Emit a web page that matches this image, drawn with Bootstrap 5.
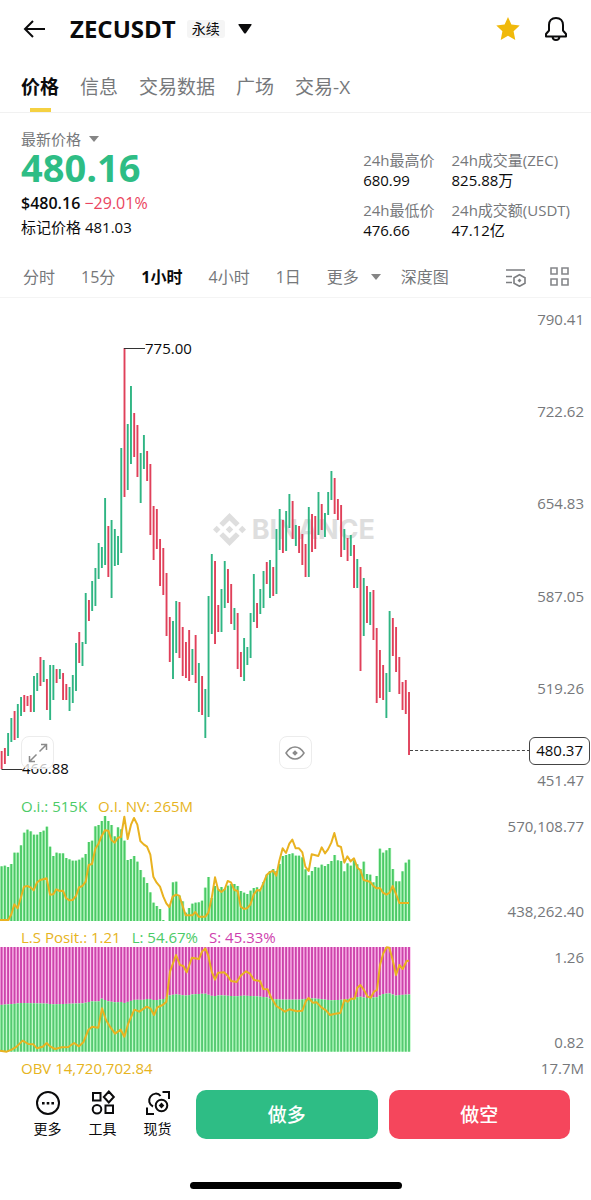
<!DOCTYPE html>
<html lang="zh-CN">
<head>
<meta charset="utf-8">
<meta name="viewport" content="width=device-width, initial-scale=1">
<title>ZECUSDT 永续</title>
<link href="https://cdn.jsdelivr.net/npm/bootstrap@5.3.0/dist/css/bootstrap.min.css" rel="stylesheet">
<style>
  :root { --up: #2ebd85; --down: #f5465c; --ink: #0b0b0c; --dim: #76787b; --gold: #e6b422; --oi: #4ccb67; --short: #cf3fae; }
  body { font-family: "Open Sans", "Noto Sans CJK SC", sans-serif; color: var(--ink); background: #fff; font-size: 15px; line-height: 20px; }
  button { font: inherit; color: inherit; background: none; border: 0; padding: 0; }
  svg { display: block; }
  .top-bar { height: 58px; padding: 0 23px; }
  .pair-name { font-size: 24px; line-height: 30px; font-weight: 700; margin: 0 11px 0 25px; }
  .perp-tag { font-size: 14px; line-height: 18px; background: #f5f5f5; border-radius: 3px; padding: 0 5px; margin-right: 13px; }
  .page-tabs { height: 55px; padding: 0 21px; gap: 21px; border-bottom: 1px solid #f1f1f1; font-size: 19px; line-height: 58px; }
  .page-tabs a { color: var(--dim); text-decoration: none; position: relative; }
  .page-tabs a.active { color: var(--ink); font-weight: 600; }
  .page-tabs a.active::after { content: ""; position: absolute; left: 50%; bottom: 0; width: 21px; height: 4px; margin-left: -10px; background: #f5d142; }
  .summary { padding: 16px 21px 0; height: 139px; }
  .last-price { font-size: 38px; line-height: 36px; font-weight: 700; color: var(--up); }
  .fiat-row { font-size: 16px; }
  .text-dim { color: var(--dim); }
  .text-down { color: #ea4560; }
  .stats { padding-top: 21px; row-gap: 10px; column-gap: 17px; display: grid; grid-template-columns: auto auto; align-content: start; }
  .intervals { height: 46px; padding: 4px 22px 0 23px; gap: 26px; font-size: 16px; line-height: 24px; color: var(--dim); border-bottom: 1px solid #f4f4f4; }
  .intervals .active { color: var(--ink); font-weight: 700; }
  .more-group { gap: 20px; }
  .plot { width: 100%; }
  .price-pane .plot { height: 496px; }
  .study .plot { height: 131px; }
  .axis { position: absolute; right: 7px; top: 0; bottom: 0; text-align: right; color: var(--dim); display: flex; flex-direction: column; justify-content: space-between; }
  .price-pane .axis { padding: 11px 0 4px; }
  .study .axis { padding: 22px 0 4px; }
  .legend-line { position: absolute; left: 21px; top: 2px; gap: 11px; }
  .over { position: absolute; line-height: 20px; }
  .high-mark { left: 145px; top: 40px; }
  .low-mark { left: 22px; top: 460px; }
  .brand-mark { left: 36%; top: 215px; gap: 6px; color: #dedede; font-family: Inter, sans-serif; font-weight: 700; font-size: 27px; line-height: 32px; }
  .tool-btn { position: absolute; top: 438px; width: 33px; height: 33px; border: 1px solid #ececec; border-radius: 8px; background: rgba(255,255,255,.75); display: flex; align-items: center; justify-content: center; }
  .expand-btn { left: 21px; }
  .eye-btn { left: 50%; margin-left: -17px; }
  .now-line { position: absolute; left: 410px; right: 61px; top: 452px; border-top: 1px dashed #444; }
  .now-tag { position: absolute; right: 1px; top: 439px; height: 28px; line-height: 25px; padding: 0 6px; border: 1px solid #444; border-radius: 6px; background: #fff; }
  .obv-row { padding: 2px 7px 2px 21px; }
  .dock { height: 72px; padding: 10px 21px 12px 20px; gap: 11px; }
  .dock-item { width: 55px; font-size: 14px; line-height: 18px; }
  .trade { height: 49px; border-radius: 10px; color: #fff; font-size: 19px; font-weight: 500; }
  .home-bar { width: 212px; height: 7px; border-radius: 4px; background: #000; margin: 30px auto 10px; }
</style>
</head>
<body>
<header class="top-bar d-flex align-items-center">
  <button type="button" aria-label="返回"><svg width="22" height="20" viewBox="0 0 22 20" fill="none" stroke="#0b0b0c" stroke-width="2"><path d="M10 2 2 10l8 8M2 10h20"/></svg></button>
  <h1 class="pair-name">ZECUSDT</h1>
  <span class="perp-tag">永续</span>
  <button type="button" aria-label="选择合约"><svg width="14" height="10" viewBox="0 0 14 10"><path d="M1 0h12q1 0 .5 1L8 9q-1 1-2 0L.5 1Q0 0 1 0z" fill="#0b0b0c"/></svg></button>
  <button type="button" class="ms-auto" aria-label="收藏"><svg width="24" height="24" viewBox="0 0 24 24"><path d="m12 0 3.400 7.600 8.300.9-6.100 5.700 1.700 8.800-7.300-4.300L4.700 23l1.700-8.800L.3 8.500l8.300-.9z" fill="#f0b90b"/></svg></button>
  <button type="button" class="ms-4" aria-label="提醒"><svg width="24" height="26" viewBox="0 0 24 26" fill="none" stroke="#0b0b0c" stroke-width="2" stroke-linejoin="round"><path d="M12 2C7.500 2 5 5 5 9v5.500L2 18v2.500h20V18l-3-3.500V9c0-4-2.500-7-7-7zM8.500 21c.5 4 6.500 4 7 0"/></svg></button>
</header>
<nav class="page-tabs d-flex">
  <a class="active" href="#price" aria-current="page">价格</a><a href="#info">信息</a><a href="#data">交易数据</a><a href="#square">广场</a><a href="#tx">交易-X</a>
</nav>
<main>
<section class="summary d-flex justify-content-between" id="price">
  <div>
    <button type="button" class="text-dim d-flex align-items-center">最新价格<svg class="ms-2" width="10" height="6" viewBox="0 0 10 6"><path d="M0 0h10L5 6z" fill="#858585"/></svg></button>
    <div class="last-price">480.16</div>
    <div class="fiat-row mt-2"><span class="fw-semibold">$480.16</span> <span class="text-down">−29.01%</span></div>
    <div class="mt-1">标记价格 481.03</div>
  </div>
  <div class="stats">
    <div><div class="text-dim">24h最高价</div><div>680.99</div></div>
    <div><div class="text-dim">24h成交量(ZEC)</div><div>825.88万</div></div>
    <div><div class="text-dim">24h最低价</div><div>476.66</div></div>
    <div><div class="text-dim">24h成交额(USDT)</div><div>47.12亿</div></div>
  </div>
</section>
<div class="intervals d-flex align-items-center">
  <button type="button">分时</button><button type="button">15分</button><button type="button" class="active">1小时</button><button type="button">4小时</button><button type="button">1日</button>
  <div class="more-group d-flex align-items-center">
    <button type="button" class="d-flex align-items-center">更多<svg class="ms-2" width="14" height="6" viewBox="0 0 14 6"><path d="M4 0h10L9 6z" fill="#858585"/></svg></button>
    <button type="button">深度图</button>
  </div>
  <div class="d-flex align-items-center gap-4 ms-auto">
    <button type="button" aria-label="指标设置"><svg width="20" height="20" viewBox="0 0 20 20" fill="none" stroke="#7c7e81" stroke-width="1.600"><path d="M0 3h19M0 9.500h6M0 15.500h6"/><path d="M13.500 7.700 19 10.800v5.400l-5.500 3.100L8 16.200v-5.400z"/><path d="m13.500 11.500 2 2-2 2-2-2z" fill="#7c7e81" stroke="none"/></svg></button>
    <button type="button" aria-label="布局"><svg width="19" height="19" viewBox="0 0 19 19" fill="none" stroke="#85878a" stroke-width="1.600"><path d="M1 1h6v6H1zM12 1h6v6h-6zM1 12h6v6H1zM12 12h6v6h-6z"/></svg></button>
  </div>
</div>
<section class="price-pane position-relative overflow-hidden">
  <div class="brand-mark over d-flex align-items-center" aria-hidden="true">
    <svg width="33" height="33" viewBox="0 0 126.610 126.610" fill="currentColor"><path d="m38.730 53.200 24.590-24.580 24.600 24.600 14.300-14.310L63.320 0l-38.900 38.900zM0 63.310l14.300-14.310 14.310 14.310L14.300 77.610zM38.730 73.410l24.590 24.590 24.600-24.600 14.310 14.290-38.910 38.920-38.910-38.880zM98 63.310 112.300 49l14.310 14.300-14.310 14.320zM77.830 63.300 63.320 48.780 52.590 59.510l-1.240 1.230-2.540 2.540 14.510 14.500 14.510-14.470z"/></svg>BINANCE
  </div>
  <div class="over low-mark">466.88</div>
  <svg class="plot position-relative" id="candles" viewBox="0 298 591 496" preserveAspectRatio="none"></svg>
  <div class="over high-mark">775.00</div>
  <div class="axis"><span>790.41</span><span>722.62</span><span>654.83</span><span>587.05</span><span>519.26</span><span>451.47</span></div>
  <button type="button" class="tool-btn expand-btn" aria-label="全屏"><svg width="20" height="20" viewBox="0 0 20 20" fill="none" stroke="#8a8a8a" stroke-width="1.500"><path d="M13 1.500h5.500V7M18.500 1.500l-7 7M7 18.500H1.500V13M1.500 18.500l7-7"/></svg></button>
  <button type="button" class="tool-btn eye-btn" aria-label="显示"><svg width="20" height="14" viewBox="0 0 20 14" fill="none" stroke="#8a8a8a" stroke-width="1.500"><path d="M1 7c5-8 13-8 18 0-5 8-13 8-18 0z"/><path d="m10 4.200 2.800 2.800-2.800 2.800L7.200 7z" fill="#8a8a8a" stroke="none"/></svg></button>
  <div class="now-line"></div><div class="now-tag">480.37</div>
</section>
<section class="study position-relative">
  <svg class="plot" id="oi" viewBox="0 12 1773 393" preserveAspectRatio="none"></svg>
  <div class="legend-line d-flex"><span style="color:var(--oi)">O.i.: 515K</span><span style="color:var(--gold)">O.I. NV: 265M</span></div>
  <div class="axis"><span>570,108.77</span><span>438,262.40</span></div>
</section>
<section class="study position-relative">
  <svg class="plot" id="ls" viewBox="0 0 1773 393" preserveAspectRatio="none"></svg>
  <div class="legend-line d-flex"><span style="color:var(--gold)">L.S Posit.: 1.21</span><span style="color:var(--oi)">L: 54.67%</span><span style="color:var(--short)">S: 45.33%</span></div>
  <div class="axis"><span>1.26</span><span>0.82</span></div>
</section>
<div class="obv-row d-flex justify-content-between align-items-center"><span style="color:var(--gold)">OBV 14,720,702.84</span><span class="text-dim">17.7M</span></div>
</main>
<footer>
  <div class="dock d-flex">
    <div class="d-flex">
      <button type="button" class="dock-item d-flex flex-column align-items-center"><svg class="mb-1" width="26" height="26" viewBox="0 0 26 26" fill="none" stroke="#0b0b0c" stroke-width="2"><circle cx="13" cy="13" r="11"/><path d="M7 12h2.600v2.600H7zM11.700 12h2.600v2.600h-2.600zM16.400 12H19v2.600h-2.600z" fill="#0b0b0c" stroke="none"/></svg>更多</button>
      <button type="button" class="dock-item d-flex flex-column align-items-center"><svg class="mb-1" width="26" height="26" viewBox="0 0 26 26" fill="none" stroke="#0b0b0c" stroke-width="2"><path d="M3 3h7.500v7.500H3zM18.800 1.500 23.800 7l-5 5.500-5-5.500zM15.500 15.500H23V23h-7.500z"/><circle cx="7" cy="19.300" r="4.300"/></svg>工具</button>
      <button type="button" class="dock-item d-flex flex-column align-items-center"><svg class="mb-1" width="26" height="26" viewBox="0 0 26 26" fill="none" stroke="#0b0b0c" stroke-width="2"><path d="M17.500 2H24v7M2 17.500V24h7M8 16.500C4 14.500 3 10 5.500 6.500S13 2.500 15.500 6"/><circle cx="16.500" cy="15.500" r="5.800"/><path d="m16.500 12.500 2.800 3-2.800 3-2.800-3z" fill="#0b0b0c" stroke="none"/></svg>现货</button>
    </div>
    <div class="d-flex flex-fill" style="gap:11px">
      <button type="button" class="trade flex-fill" style="background:var(--up)">做多</button>
      <button type="button" class="trade flex-fill" style="background:var(--down)">做空</button>
    </div>
  </div>
  <div class="home-bar"></div>
</footer>
<script src="https://cdn.jsdelivr.net/npm/bootstrap@5.3.0/dist/js/bootstrap.bundle.min.js"></script>
<script>
  // One entry per hourly candle: direction, high, low (plot units).
  const candles = `r751-769 r748-764 g733-756 g718-742 r711-740 g704-738 g697-716 r695-712 r696-706 r695-712
   g676-712 g673-691 r657-686 g660-682 r679-710 g665-720 g665-700 r669-683 g669-679 r673-700
   r684-700 g687-711 g675-703 g643-691 r632-663 g642-666 g593-644 r600-621 g581-611 g568-606
   g543-579 g547-568 g498-565 r526-577 g520-598 g529-566 g536-565 g448-553 r348-497 g424-490
   g386-464 r413-457 r425-477 g453-503 g435-469 r451-481 r464-535 r506-560 r509-549 r539-586
   r548-595 r573-636 r617-662 g621-679 g601-653 r602-658 r627-676 r642-678 r630-681 g649-675
   r635-683 g663-712 r676-715 g689-738 g596-717 g554-634 r561-644 r605-632 g589-632 g561-608
   r569-603 r584-624 g608-630 r613-669 r652-677 g638-681 g647-665 g613-658 g574-622 r603-628
   g589-614 g571-608 r562-584 g560-598 r567-596 g529-594 g509-550 r520-553 g511-551 g494-528
   r501-539 g525-546 r526-553 r534-565 r544-577 g507-577 r514-552 r516-549 g492-535 r504-530
   g513-537 g492-515 g471-500 r478-514 r499-520 r505-557 g529-550 r538-561 g535-556 r545-588
   g559-588 r567-671 g578-636 r586-623 g592-625 r590-640 r628-703 r650-698 r665-700 g673-718
   g611-692 r618-656 r627-672 r657-694 r682-710 r680-714 r692-755`.trim().split(/\s+/);
  const openInterest = [229,227,231,222,188,188,166,128,119,124,134,134,126,122,110,170,198,188,190,190,204,208,212,212,209,203,192,156,152,109,105,93,78,93,105,139,112,118,152,210,207,198,215,240,262,279,307,338,348,357,390,393,345,277,275,317,334,368,354,341,338,337,332,293,261,324,288,298,291,297,287,282,282,288,303,308,312,302,294,292,297,276,254,243,237,243,222,198,195,192,190,197,197,202,238,256,243,231,233,224,228,222,213,195,211,213,244,220,227,211,223,237,215,252,254,277,258,176,188,181,174,237,274,274,244,218,209];
  const oiLine = "0,390 25,390 34,373 43,343 53,355 63,322 72,290 82,288 92,292 101,301 111,277 121,270 140,265 150,314 160,313 169,298 179,303 189,302 198,324 208,331 218,330 228,318 237,292 247,288 257,275 266,225 276,222 286,176 295,162 305,138 315,121 325,122 334,150 344,158 354,143 363,141 373,80 383,147 393,104 402,84 412,104 421,153 431,163 441,170 451,194 460,260 470,278 480,290 490,320 499,340 508,351 518,320 528,314 538,317 547,345 557,376 577,376 586,366 596,380 616,380 625,368 635,325 645,262 654,298 664,306 674,298 683,273 693,277 703,300 713,303 722,350 732,357 741,355 751,344 761,314 771,300 780,302 790,280 800,255 809,247 819,242 829,257 838,212 848,175 858,189 868,161 877,149 887,175 897,175 907,187 916,230 926,243 935,193 955,198 965,172 975,190 984,178 994,158 1003,129 1013,167 1023,171 1033,218 1042,199 1052,214 1062,205 1072,233 1081,240 1091,270 1110,275 1120,288 1130,295 1140,294 1149,308 1159,314 1169,308 1178,288 1188,312 1198,339 1227,339";
  // Long/short split along the time axis: x, y pairs, interpolated for each bar.
  const split = [[0,240],[40,237],[65,234],[140,236],[160,238],[250,235],[275,229],[295,230],[306,221],[325,229],[345,232],[365,231],[373,234],[405,224],[430,225],[445,221],[465,226],[490,222],[510,211],[528,208],[560,212],[580,208],[615,206],[640,214],[660,211],[710,214],[730,212],[770,214],[800,217],[815,222],[850,224],[900,224],[930,220],[950,221],[995,226],[1030,224],[1060,219],[1080,215],[1100,219],[1130,217],[1150,207],[1168,205],[1188,212],[1200,210],[1240,208]];
  const lsLine = "0,377 20,380 35,374 50,365 68,347 85,357 100,358 111,370 128,365 140,354 150,364 165,372 185,367 205,366 222,354 237,364 250,352 265,315 276,305 295,308 306,250 318,285 330,305 345,326 362,314 373,335 385,295 403,254 418,260 440,245 451,250 462,270 472,247 488,240 499,230 510,140 528,90 540,120 550,123 560,142 576,98 597,102 606,80 616,70 625,92 635,140 645,164 654,143 672,142 683,152 693,168 710,171 722,152 738,139 750,146 762,165 780,168 790,192 803,193 813,217 829,243 855,260 868,253 890,259 907,257 918,228 926,219 938,233 950,232 965,248 978,256 990,270 1005,266 1021,264 1033,225 1043,230 1053,221 1064,221 1072,188 1081,180 1092,195 1103,215 1112,218 1122,200 1131,195 1140,120 1150,85 1160,67 1168,68 1178,105 1188,150 1198,120 1208,132 1220,108 1227,107";
  const rect = (x, y, w, h, fill) => `<rect x="${x}" y="${y}" width="${w}" height="${h}" fill="${fill}"/>`;
  const line = (pts, w) => `<polyline points="${pts}" fill="none" stroke="#e9b220" stroke-width="${w}" stroke-linejoin="round"/>`;

  document.getElementById("candles").innerHTML = candles.map((c, i) => {
    const [hi, lo] = c.slice(1).split("-").map(Number);
    return rect((0.7 + i * 3.233).toFixed(2), hi, 1.9, lo - hi, c[0] === "g" ? "#2fb583" : "#e0405a");
  }).join("") + '<path d="M124 348.500h21M1.500 769.500h21" stroke="#333" fill="none"/>';

  document.getElementById("oi").innerHTML = openInterest.map((y, i) => {
    const x = i * 9.7;
    return rect(x, y, 9.7, 393 - y, "#b9f7c3") + rect(x + 2, y, 5.6, 393 - y, "#4bc966");
  }).join("") + line(oiLine, 6);

  const splitAt = x => {
    const k = split.findIndex(p => p[0] > x), a = split[k - 1], b = split[k];
    return a[1] + (b[1] - a[1]) * (x - a[0]) / (b[0] - a[0]);
  };
  document.getElementById("ls").innerHTML = openInterest.map((_, i) => {
    const x = i * 9.7, y = splitAt(x + 5);
    return rect(x, 66, 9.7, y - 66, "#f9b4e8") + rect(x + 2, 66, 5.6, y - 66, "#cd43ab")
         + rect(x, y, 9.7, 380 - y, "#b0f8bd") + rect(x + 2, y, 5.6, 380 - y, "#55c971");
  }).join("") + line(lsLine, 6);
</script>
</body>
</html>
